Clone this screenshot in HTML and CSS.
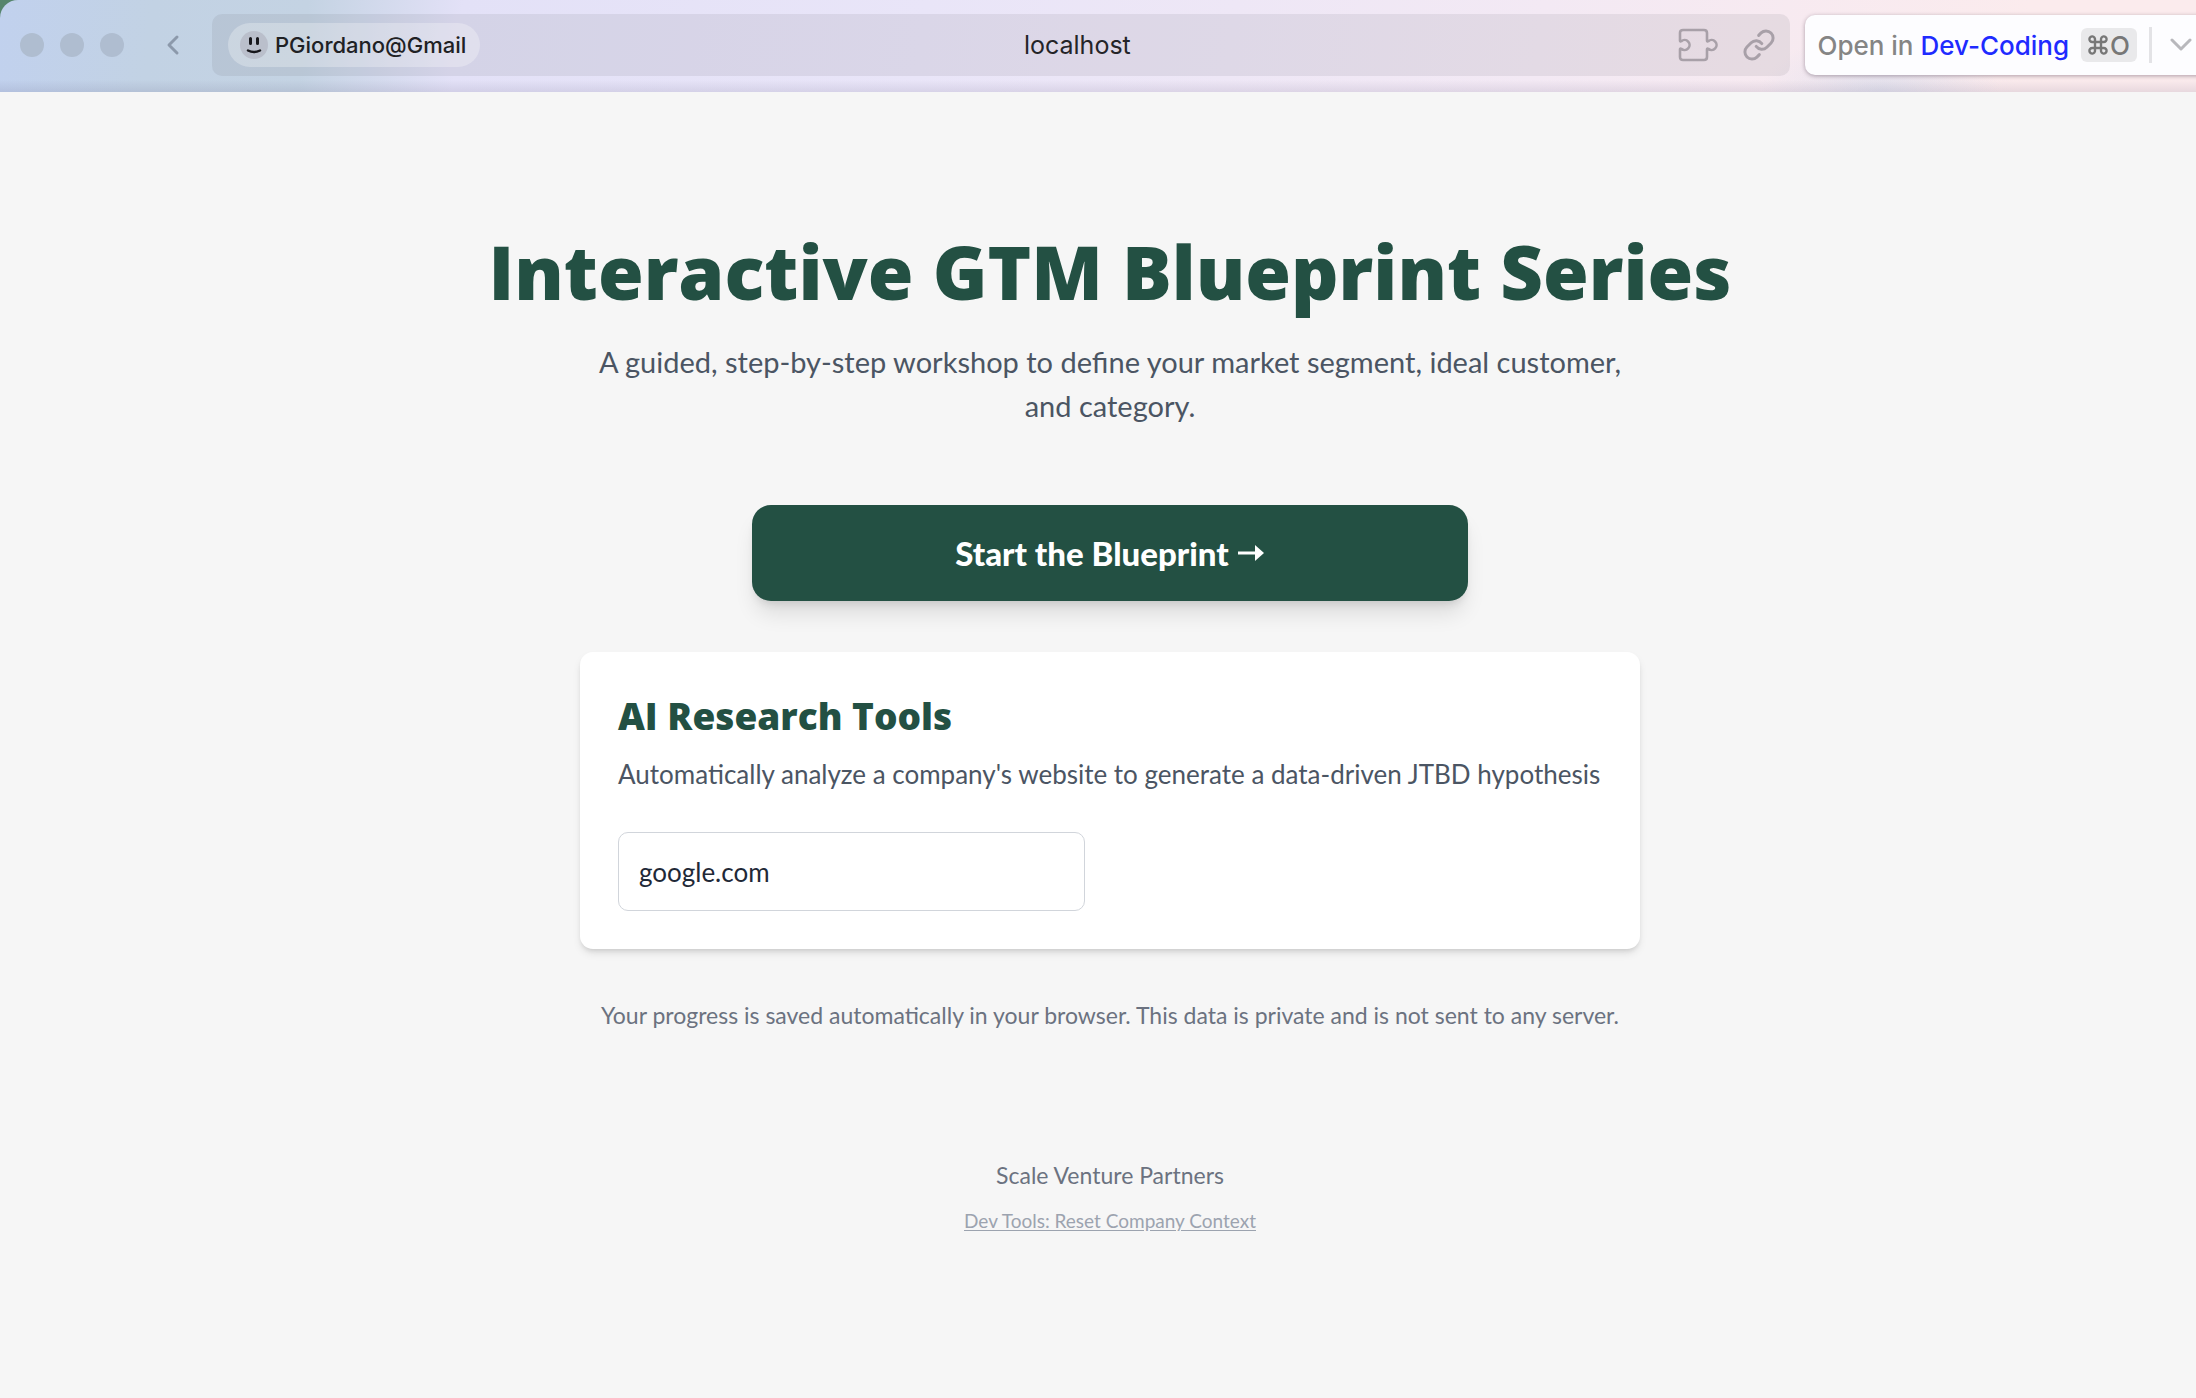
FILE: index.html
```html
<!DOCTYPE html>
<html lang="en">
<head>
  <meta charset="utf-8">
  <meta name="viewport" content="width=device-width, initial-scale=1">
  <title>Interactive GTM Blueprint Series</title>
  <link rel="stylesheet" href="styles.css">
</head>
<body>
  <header class="toolbar">
    <div class="toolbar-inner">
      <div class="lights" aria-hidden="true"><span></span><span></span><span></span></div>
      <button class="back" type="button" aria-label="Back">
        <svg width="14" height="22" viewBox="0 0 14 22" fill="none" stroke="currentColor" stroke-width="3" stroke-linecap="round" stroke-linejoin="round"><path d="M11 3L3 11l8 8"/></svg>
      </button>
      <div class="address">
        <button class="profile" type="button">
          <svg width="28" height="28" viewBox="0 0 28 28" fill="none" stroke="#17171b" stroke-linecap="round"><circle cx="14" cy="14" r="14" fill="#babfcb" stroke="none"/><path d="M10.500 7.500v5M17.500 7.500v5" stroke-width="3"/><path d="M8 19.500q6 3.200 12 0" stroke-width="2.500"/></svg>
          <span>PGiordano@Gmail</span>
        </button>
        <input class="url" type="text" value="localhost" aria-label="Address">
        <button class="icon" type="button" aria-label="Extensions">
          <svg width="42" height="34" viewBox="0 0 42 34" fill="none" stroke="currentColor" stroke-width="2.600" stroke-linejoin="round"><path d="M5 2h21q3 0 3 3v7.500q0 1.500 1.300 .700a5 5 0 1 1 0 7.600q-1.300-.800-1.300 .700v7.500q0 3-3 3h-21q-3 0-3-3v-7.500q0-1.500 1.300-.700a5 5 0 1 0 0-7.600q-1.300 .800-1.300-.700v-7.500q0-3 3-3z"/></svg>
        </button>
        <button class="icon" type="button" aria-label="Copy link">
          <svg width="34" height="34" viewBox="0 0 24 24" fill="none" stroke="currentColor" stroke-width="2.100" stroke-linecap="round" stroke-linejoin="round"><path d="M10 13a5 5 0 0 0 7.540.540l3-3a5 5 0 0 0-7.070-7.070l-1.720 1.710"/><path d="M14 11a5 5 0 0 0-7.540-.540l-3 3a5 5 0 0 0 7.070 7.070l1.710-1.710"/></svg>
        </button>
      </div>
      <div class="open-in">
        <button class="open-main" type="button">
          <span>Open in <b>Dev-Coding</b></span>
          <kbd><svg width="20" height="20" viewBox="0 0 20 20" fill="none" stroke="currentColor" stroke-width="2.400"><path d="M7 7V4.500A2.800 2.800 0 1 0 4.200 7H15.800A2.800 2.800 0 1 0 13 4.500V15.500A2.800 2.800 0 1 0 15.800 13H4.200A2.800 2.800 0 1 0 7 15.500z"/></svg>O</kbd>
        </button>
        <button class="open-more" type="button" aria-label="More destinations">
          <svg width="22" height="14" viewBox="0 0 22 14" fill="none" stroke="currentColor" stroke-width="3" stroke-linecap="round" stroke-linejoin="round"><path d="M2 2l9 9 9-9"/></svg>
        </button>
      </div>
    </div>
  </header>
  <main class="page">
    <h1>Interactive GTM Blueprint Series</h1>
    <p class="lead">A guided, step-by-step workshop to define your market segment, ideal customer, and category.</p>
    <button class="start" type="button">Start the Blueprint
      <svg width="28" height="20" viewBox="0 0 28 20" fill="currentColor" aria-hidden="true"><path d="M1 8.500h17V2l9 8-9 8v-6.500H1z"/></svg>
    </button>
    <section class="card">
      <h2>AI Research Tools</h2>
      <p>Automatically analyze a company's website to generate a data-driven JTBD hypothesis</p>
      <input type="text" value="google.com" aria-label="Company website">
    </section>
    <p class="note">Your progress is saved automatically in your browser. This data is private and is not sent to any server.</p>
    <footer class="footer">
      <p>Scale Venture Partners</p>
      <a href="#reset">Dev Tools: Reset Company Context</a>
    </footer>
  </main>
</body>
</html>
```
FILE: styles.css
```css
* { box-sizing: border-box; }

body {
  margin: 0;
  min-height: 100vh;
  overflow-x: hidden;
  background: #f6f6f6;
  color: #1f2937;
  font-family: Lato, "Open Sans", sans-serif;
}

button, input { font: inherit; }
button { border: 0; background: none; padding: 0; cursor: pointer; }
svg { display: block; flex: none; }
h1, h2, p { margin: 0; }

/* Browser toolbar */
.toolbar {
  background: #56856d;
  font-family: Inter, sans-serif;
}

.toolbar-inner {
  display: flex;
  align-items: center;
  height: 92px;
  padding: 0 0 2px 20px;
  overflow: hidden;
  border-top-left-radius: 18px;
  background:
    linear-gradient(to bottom, transparent 80px, rgba(60, 50, 90, 0.1) 92px),
    radial-gradient(ellipse 120px 60px at 1880px 92px, rgba(205, 216, 236, 0.5), transparent),
    linear-gradient(97deg, #c1d1ee 0, #c2d2e4 7%, #c4d3e3 14%, #e3e1f7 21%, #e9e5f8 42%, #f3e9f4 70%, #fbebed 92%, #fbebed 100%);
}

.lights { display: flex; gap: 16px; }
.lights span { width: 24px; height: 24px; border-radius: 50%; background: #afbdd0; }

.back { margin: 0 32px 0 42px; color: #8c99ab; }

.address {
  display: flex;
  flex: 1;
  align-items: center;
  height: 62px;
  padding: 0 14px 0 16px;
  border-radius: 10px;
  background: rgba(90, 90, 100, 0.1);
}

.profile {
  display: flex;
  align-items: center;
  gap: 7px;
  height: 44px;
  padding: 0 14px 0 12px;
  border-radius: 22px;
  background: rgba(255, 255, 255, 0.28);
  color: #202124;
  font-size: 22px;
  font-weight: 500;
}

.url {
  flex: 1;
  min-width: 0;
  border: 0;
  background: none;
  color: #242428;
  font-size: 25px;
  text-align: center;
}

.icon { margin-left: 4px; color: #a8a0a8; }
.icon + .icon { margin-left: 22px; }

.open-in {
  display: flex;
  align-items: center;
  height: 60px;
  margin: 0 -20px 0 15px;
  padding: 0 24px 0 12px;
  border-radius: 10px;
  background: #fdfdff;
  box-shadow: 0 1px 4px rgba(60, 40, 60, 0.4);
}

.open-main {
  display: flex;
  align-items: center;
  gap: 12px;
  color: #858585;
  font-size: 26px;
  font-weight: 500;
  white-space: nowrap;
}

.open-main b { color: #1f2bff; font-weight: 500; }

kbd {
  display: flex;
  align-items: center;
  gap: 2px;
  height: 34px;
  padding: 0 7px;
  border-radius: 6px;
  background: #e9e9eb;
  color: #777;
  font: 500 26px Inter, sans-serif;
}

.open-more {
  height: 36px;
  margin-left: 12px;
  padding-left: 18px;
  border-left: 3px solid #e3e3e6;
  color: #b8b8bc;
}

/* Landing page */
.page {
  display: flex;
  flex-direction: column;
  align-items: center;
  padding: 132px 0 80px 24px;
}

h1, h2 {
  color: #235043;
  font-family: "Open Sans", sans-serif;
  font-weight: 800;
}

h1 { font-size: 74px; line-height: 96px; text-align: center; }

.lead {
  max-width: 1076px;
  margin-top: 20px;
  color: #4b5563;
  font-size: 29px;
  line-height: 44px;
  text-align: center;
}

.start {
  display: flex;
  align-items: center;
  justify-content: center;
  gap: 8px;
  width: 716px;
  max-width: 90%;
  height: 96px;
  margin-top: 77px;
  border-radius: 19px;
  background: #235043;
  box-shadow: 0 16px 22px -4px rgba(0, 0, 0, 0.11), 0 6px 10px -4px rgba(0, 0, 0, 0.12);
  color: #fff;
  font-size: 33px;
  font-weight: 900;
}

.card {
  width: 1060px;
  max-width: 90%;
  margin-top: 51px;
  padding: 38px;
  border-radius: 13px;
  background: #fff;
  box-shadow: 0 5px 8px -1px rgba(0, 0, 0, 0.1), 0 3px 5px -2px rgba(0, 0, 0, 0.12);
}

h2 { font-size: 37px; line-height: 52px; }

.card p {
  margin-top: 12px;
  color: #4b5563;
  font-size: 26px;
  line-height: 40px;
}

.card input {
  display: block;
  width: 467px;
  max-width: 100%;
  height: 79px;
  margin-top: 38px;
  padding: 0 20px;
  border: 1px solid #d1d5db;
  border-radius: 10px;
  background: #fff;
  color: #1f2937;
  font-size: 26px;
}

.note, .footer { color: #6b7280; font-size: 23px; line-height: 32px; text-align: center; }
.note { margin-top: 50px; }
.footer { margin-top: 128px; }

.footer a {
  display: block;
  margin-top: 14px;
  color: #9ca3af;
  font-size: 19px;
  text-underline-offset: 2px;
}
```
